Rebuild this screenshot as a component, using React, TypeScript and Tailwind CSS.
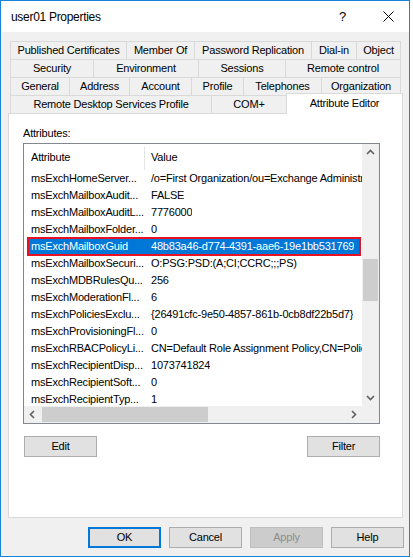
const tabRows: { label: string; w: string }[][] = [
  [
    { label: 'Published Certificates', w: 'w-[116px]' },
    { label: 'Member Of', w: 'w-[68px]' },
    { label: 'Password Replication', w: 'w-[117px]' },
    { label: 'Dial-in', w: 'w-[45px]' },
    { label: 'Object', w: 'w-[45px] border-r' },
  ],
  [
    { label: 'Security', w: 'w-[83px]' },
    { label: 'Environment', w: 'w-[105px]' },
    { label: 'Sessions', w: 'w-[87px]' },
    { label: 'Remote control', w: 'w-[116px] border-r' },
  ],
  [
    { label: 'General', w: 'w-[59px]' },
    { label: 'Address', w: 'w-[60px]' },
    { label: 'Account', w: 'w-[62px]' },
    { label: 'Profile', w: 'w-[52px]' },
    { label: 'Telephones', w: 'w-[78px]' },
    { label: 'Organization', w: 'w-[80px] border-r' },
  ],
];

const attributes: [string, string][] = [
  ['msExchHomeServer...', '/o=First Organization/ou=Exchange Administrative Group (FYDIBOHF23SPDLT)'],
  ['msExchMailboxAudit...', 'FALSE'],
  ['msExchMailboxAuditL...', '7776000'],
  ['msExchMailboxFolder...', '0'],
  ['msExchMailboxGuid', '48b83a46-d774-4391-aae6-19e1bb531769'],
  ['msExchMailboxSecuri...', 'O:PSG:PSD:(A;CI;CCRC;;;PS)'],
  ['msExchMDBRulesQu...', '256'],
  ['msExchModerationFl...', '6'],
  ['msExchPoliciesExclu...', '{26491cfc-9e50-4857-861b-0cb8df22b5d7}'],
  ['msExchProvisioningFl...', '0'],
  ['msExchRBACPolicyLi...', 'CN=Default Role Assignment Policy,CN=Policies,CN=RBAC'],
  ['msExchRecipientDisp...', '1073741824'],
  ['msExchRecipientSoft...', '0'],
  ['msExchRecipientTyp...', '1'],
];

function Chevron({ dir }: { dir: 'up' | 'down' | 'left' | 'right' }) {
  const pts = {
    up: '1,6 4.5,2.5 8,6',
    down: '1,3 4.5,6.5 8,3',
    left: '6,1 2.5,4.5 6,8',
    right: '3,1 6.5,4.5 3,8',
  }[dir];
  return (
    <svg width="9" height="9" viewBox="0 0 9 9">
      <polyline points={pts} fill="none" stroke="#606060" strokeWidth="1.6" />
    </svg>
  );
}

function Button({ label, primary, disabled }: { label: string; primary?: boolean; disabled?: boolean }) {
  let cls = 'bg-[#e1e1e1] border border-[#adadad] text-black';
  if (primary) cls = 'bg-[#e1e1e1] border-2 border-[#0078d7] text-black';
  if (disabled) cls = 'bg-[#cccccc] border border-[#bfbfbf] text-[#8c8c8c]';
  return (
    <div className={`w-[73px] h-[21px] flex items-center justify-center ${cls}`}>{label}</div>
  );
}

export default function App() {
  return (
    <div className="w-[413px] h-[558px] bg-white font-['Liberation_Sans',Arial,sans-serif]">
      <div className="w-[410px] h-[557px] border border-[#1883d7] flex flex-col bg-[#f0f0f0]">
        {/* title bar */}
        <div className="h-[31px] shrink-0 bg-white flex items-center text-black">
          <span className="ml-[10px] text-[12px] tracking-[-0.3px]">user01 Properties</span>
          <span className="ml-auto text-[13px] leading-none w-[7px] text-center">?</span>
          <svg className="ml-[37px] mr-[15px]" width="11" height="11" viewBox="0 0 11 11">
            <path d="M0.5 0.5 L10.5 10.5 M10.5 0.5 L0.5 10.5" stroke="#000" strokeWidth="1" />
          </svg>
        </div>

        <div className="flex-1 pt-[9px] pl-[7px] text-[11px] text-black tracking-[-0.2px]">
          {/* tabs */}
          <div className="ml-[2px]">
            {tabRows.map((row, i) => (
              <div key={i} className="flex h-[18px]">
                {row.map((t) => (
                  <div
                    key={t.label}
                    className={`${t.w} h-[18px] border-l border-t border-[#d9d9d9] flex items-center justify-center whitespace-nowrap`}
                  >
                    {t.label}
                  </div>
                ))}
              </div>
            ))}
            <div className="flex h-[18px] items-start">
              <div className="w-[201px] h-[18px] border-l border-t border-[#d9d9d9] flex items-center justify-center">
                Remote Desktop Services Profile
              </div>
              <div className="w-[75px] h-[18px] border-l border-t border-[#d9d9d9] flex items-center justify-center">
                COM+
              </div>
              <div className="relative z-10 -mt-[2px] w-[117px] h-[21px] bg-white border-l border-r border-t border-[#d9d9d9] flex items-center justify-center pb-[2px]">
                Attribute Editor
              </div>
            </div>
          </div>

          {/* panel */}
          <div className="w-[395px] h-[405px] bg-white border border-[#d9d9d9] pt-[13px] pl-[14px]">
            <div className="h-[13px] leading-[13px]">Attributes:</div>
            <div className="mt-[3px] w-[357px] h-[281px] border border-[#828790] grid grid-cols-[338px_17px] grid-rows-[262px_17px]">
              <div className="overflow-hidden flex flex-col">
                <div className="h-[26px] shrink-0 flex">
                  <div className="w-[120px] pl-[7px] flex items-center">Attribute</div>
                  <div className="w-px h-[23px] self-end bg-[#e5e5e5]" />
                  <div className="pl-[6px] flex items-center">Value</div>
                </div>
                {attributes.map(([name, value], i) => {
                  const selected = i === 4;
                  return (
                    <div
                      key={name}
                      className={`relative h-[17px] shrink-0 flex leading-[17px] whitespace-nowrap ${selected ? 'text-white' : ''}`}
                    >
                      {selected && (
                        <div className="absolute left-[3px] right-[1px] -top-px -bottom-px bg-[#0078d7] border-2 border-[#e81123]" />
                      )}
                      <div className="relative w-[121px] shrink-0 pl-[7px] overflow-hidden">{name}</div>
                      <div className="relative pl-[6px] overflow-hidden">{value}</div>
                    </div>
                  );
                })}
              </div>

              <div className="bg-[#f0f0f0] flex flex-col">
                <div className="h-[17px] flex items-center justify-center">
                  <Chevron dir="up" />
                </div>
                <div className="mt-[98px] mx-px h-[42px] bg-[#cdcdcd]" />
                <div className="flex-1" />
                <div className="h-[17px] flex items-center justify-center">
                  <Chevron dir="down" />
                </div>
              </div>

              <div className="bg-[#f0f0f0] flex items-center">
                <div className="w-[17px] h-[17px] flex items-center justify-center">
                  <Chevron dir="left" />
                </div>
                <div className="ml-px w-[166px] h-[15px] bg-[#cdcdcd]" />
                <div className="flex-1" />
                <div className="w-[17px] h-[17px] flex items-center justify-center">
                  <Chevron dir="right" />
                </div>
              </div>
              <div className="bg-[#f0f0f0]" />
            </div>

            <div className="mt-[12px] w-[357px] pl-px flex justify-between">
              <Button label="Edit" />
              <Button label="Filter" />
            </div>
          </div>

          {/* dialog buttons */}
          <div className="mt-[9px] pr-[5px] flex justify-end gap-[8px]">
            <Button label="OK" primary />
            <Button label="Cancel" />
            <Button label="Apply" disabled />
            <Button label="Help" />
          </div>
        </div>
      </div>
    </div>
  );
}
